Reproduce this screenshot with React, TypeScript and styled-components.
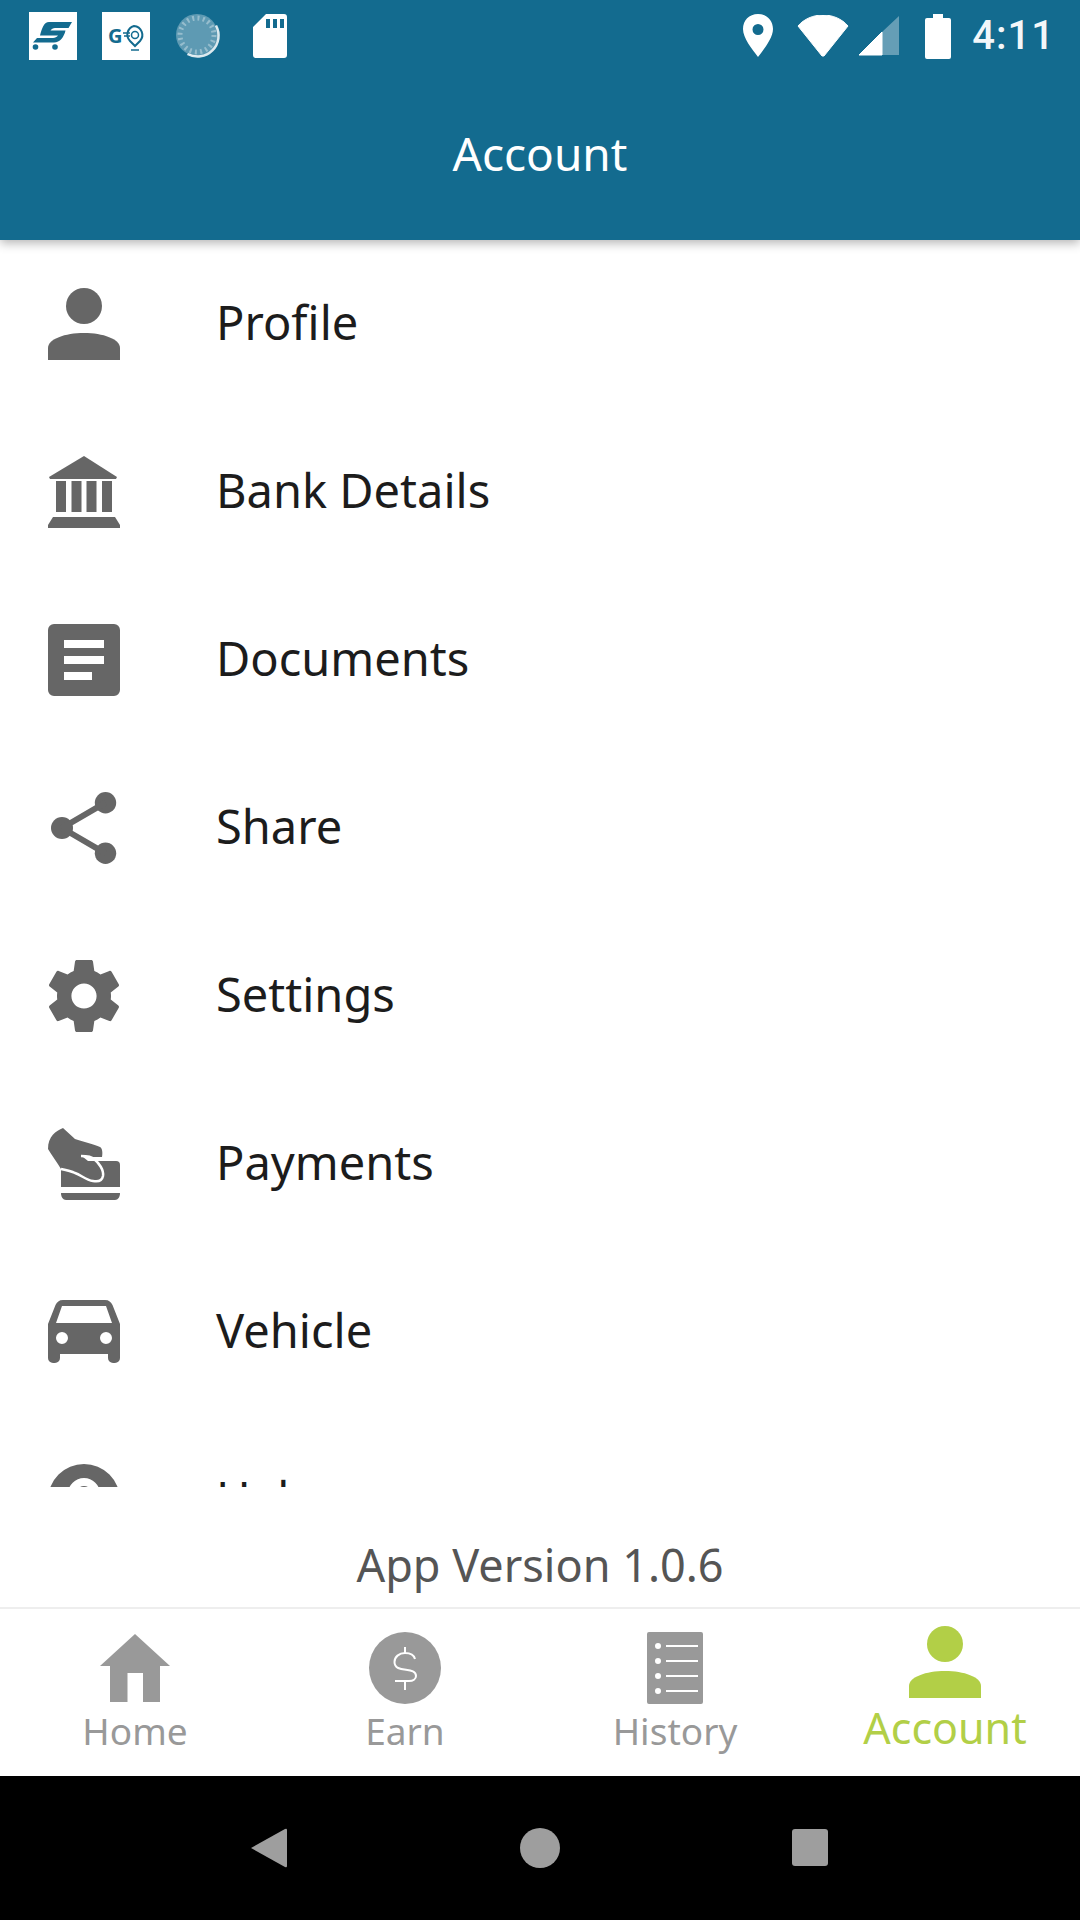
import React from "react";
import styled, { createGlobalStyle } from "styled-components";

const GlobalStyle = createGlobalStyle`
  html, body {
    margin: 0;
    padding: 0;
    background: #fff;
  }
  * {
    box-sizing: border-box;
  }
`;

const Screen = styled.div`
  display: flex;
  flex-direction: column;
  width: 1080px;
  height: 1920px;
  overflow: hidden;
  font-family: "Noto Sans", "Open Sans", sans-serif;
`;

const Header = styled.header`
  position: relative;
  z-index: 2;
  flex: 0 0 240px;
  background: #136b8f;
  box-shadow: 0 3px 10px rgba(0, 0, 0, 0.3);
  color: #fff;
`;

const StatusBar = styled.div`
  display: flex;
  align-items: center;
  justify-content: space-between;
  height: 72px;
  padding: 0 25px 0 29px;
`;

const StatusGroup = styled.div`
  display: flex;
  align-items: center;
`;

const Clock = styled.span`
  margin-left: 21px;
  font-family: Roboto, sans-serif;
  font-weight: 500;
  font-size: 40px;
  letter-spacing: 1px;
  line-height: 1;
  opacity: 0.95;
`;

const Title = styled.h1`
  margin: 0;
  padding-top: 49px;
  font-size: 46px;
  font-weight: 400;
  line-height: 64px;
  text-align: center;
`;

const List = styled.div`
  flex: 0 0 1247px;
  overflow: hidden;
`;

const Row = styled.div`
  display: flex;
  align-items: center;
  flex: none;
  height: 168px;
  padding-left: 48px;
`;

const RowIcon = styled.svg`
  flex: none;
  width: 72px;
  height: 72px;
  fill: #666;
`;

const RowLabel = styled.span`
  margin: 0 0 5px 96px;
  font-size: 47px;
  color: #1c1c1c;
`;

const Version = styled.div`
  display: flex;
  flex: 0 0 120px;
  align-items: center;
  justify-content: center;
  padding-top: 34px;
  font-size: 45px;
  color: #555;
`;

const TabBar = styled.nav`
  display: grid;
  flex: 0 0 169px;
  grid-template-columns: repeat(4, 1fr);
  border-top: 2px solid #eee;
`;

const Tab = styled.div<{ $active?: boolean }>`
  display: flex;
  flex-direction: column;
  align-items: center;
  padding-top: ${(p) => (p.$active ? "17px" : "23px")};
  color: ${(p) => (p.$active ? "#b2cf47" : "#999")};
  fill: ${(p) => (p.$active ? "#b2cf47" : "#999")};
`;

const TabIcon = styled.svg`
  width: 72px;
  height: 72px;
`;

const TabLabel = styled.span<{ $active?: boolean }>`
  font-size: ${(p) => (p.$active ? "43px" : "37px")};
  line-height: ${(p) => (p.$active ? "60px" : "54px")};
`;

const NavBar = styled.div`
  display: grid;
  flex: 0 0 144px;
  grid-template-columns: repeat(3, 40px);
  justify-content: center;
  align-items: center;
  column-gap: 231px;
  background: #000;
`;

const NavIcon = styled.svg`
  width: 40px;
  height: 40px;
  fill: #9e9e9e;
`;

const PersonPath = () => (
  <>
    <circle cx="36" cy="18" r="18" />
    <path d="M0 72V60C0 51 17 45 36 45s36 6 36 15v12z" />
  </>
);

const GEAR =
  "M19.43 12.98c.04-.32.07-.64.07-.98s-.03-.66-.07-.98l2.11-1.65c.19-.15.24-.42.12-.64l-2-3.46c-.12-.22-.39-.3-.61-.22l-2.49 1c-.52-.4-1.08-.73-1.69-.98l-.38-2.65C14.46 2.18 14.25 2 14 2h-4c-.25 0-.46.18-.49.42l-.38 2.65c-.61.25-1.17.59-1.69.98l-2.49-1c-.23-.09-.49 0-.61.22l-2 3.46c-.13.22-.07.49.12.64l2.11 1.65c-.04.32-.07.65-.07.98s.03.66.07.98l-2.11 1.65c-.19.15-.24.42-.12.64l2 3.46c.12.22.39.3.61.22l2.49-1c.52.4 1.08.73 1.69.98l.38 2.65c.03.24.24.42.49.42h4c.25 0 .46-.18.49-.42l.38-2.65c.61-.25 1.17-.59 1.69-.98l2.49 1c.23.09.49 0 .61-.22l2-3.46c.12-.22.07-.49-.12-.64l-2.11-1.65zM12 15.5c-1.93 0-3.5-1.57-3.5-3.5s1.57-3.5 3.5-3.5 3.5 1.57 3.5 3.5-1.57 3.5-3.5 3.5z";

const items: { label: string; icon: React.ReactNode }[] = [
  { label: "Profile", icon: <PersonPath /> },
  {
    label: "Bank Details",
    icon: (
      <>
        <path d="M36 0l33 21-1 2H2l-1-2z" />
        <path d="M8 25h10v31H8zM23.500 25h10v31h-10zM38.500 25h10v31h-10zM54 25h10v31H54z" />
        <path d="M5 61h62l5 8v3H0v-3z" />
      </>
    ),
  },
  {
    label: "Documents",
    icon: (
      <path
        fillRule="evenodd"
        d="M6 0h60a6 6 0 0 1 6 6v60a6 6 0 0 1-6 6H6a6 6 0 0 1-6-6V6a6 6 0 0 1 6-6zM16 16v8h40v-8zM16 32v8h40v-8zM16 48v8h28v-8z"
      />
    ),
  },
  {
    label: "Share",
    icon: (
      <>
        <circle cx="57.500" cy="10.700" r="10.700" />
        <circle cx="14" cy="36" r="11" />
        <circle cx="57.500" cy="61.300" r="10.700" />
        <path d="M14 36L57.500 10.700M14 36L57.500 61.300" stroke="#666" strokeWidth="6" />
      </>
    ),
  },
  {
    label: "Settings",
    icon: <path transform="translate(-7.200 -7.200) scale(3.600)" d={GEAR} />,
  },
  {
    label: "Payments",
    icon: (
      <>
        <path d="M13 33h55a4 4 0 0 1 4 4v22H13z" />
        <path d="M13 65h59c0 4-2 7-5 7H18c-3 0-5-3-5-7z" />
        <path d="M15 0C8 3 0 8 0 21c4 7 9 13 13 20l20 4 12-8-10-8h19c1-5 0-9-2-10-6-3-17-5-25-8z" />
        <path
          d="M33 28c5 0 10 0 13 3 5 4 10 11 9 17-1 5-5 6-10 5-7-1-12-6-18-8-4-2-9-3-14-4"
          fill="none"
          stroke="#fff"
          strokeWidth="2.500"
        />
      </>
    ),
  },
  {
    label: "Vehicle",
    icon: (
      <path
        fillRule="evenodd"
        d="M15 4h42c4 0 6 2 7.500 5L72 28v34a5 5 0 0 1-5 5h-2a5 5 0 0 1-5-5v-4H12v4a5 5 0 0 1-5 5H5a5 5 0 0 1-5-5V28L7.500 9C9 6 11 4 15 4zM14 10L8 27h56l-6-17zM14 36a6 6 0 1 0 0 12 6 6 0 0 0 0-12zM58 36a6 6 0 1 0 0 12 6 6 0 0 0 0-12z"
      />
    ),
  },
  {
    label: "Help",
    icon: (
      <path
        fillRule="evenodd"
        d="M36 0a36 36 0 1 1 0 72 36 36 0 0 1 0-72zM36 14a16 16 0 0 0-16 16h8a8 8 0 0 1 16 0c0 8-12 7-12 20h8c0-9 12-10 12-20a16 16 0 0 0-16-16z"
      />
    ),
  },
];

const App: React.FC = () => {
  return (
    <Screen>
      <GlobalStyle />
      <Header>
        <StatusBar>
          <StatusGroup>
            <svg width="48" height="48" viewBox="0 0 48 48">
              <rect width="48" height="48" fill="#fff" />
              <path
                d="M20 10H43L39.500 16H26C24 16 22.500 17 21.500 18.500H36.500C35 25 31 30.500 25 30.500H4L8 26H24C26 26 28 25 29 23.500H11C13 16 15 10 20 10z"
                fill="#136b8f"
              />
              <circle cx="6.500" cy="35" r="2.800" fill="#136b8f" />
              <circle cx="26" cy="35" r="2.800" fill="#136b8f" />
            </svg>
            <svg width="48" height="48" viewBox="0 0 48 48" style={{ marginLeft: 25 }}>
              <rect width="48" height="48" fill="#fff" />
              <text
                x="6"
                y="31"
                fontFamily="Noto Sans, sans-serif"
                fontWeight="700"
                fontSize="20"
                fill="#136b8f"
              >
                G
              </text>
              <path
                d="M32 14a9 9 0 0 1 6 15l-5 5-5-5a9 9 0 0 1 4-15z"
                fill="none"
                stroke="#136b8f"
                strokeWidth="2"
              />
              <circle cx="33" cy="23" r="3.500" fill="none" stroke="#136b8f" strokeWidth="1.500" />
              <path d="M21 21h7M22 24h6" stroke="#136b8f" strokeWidth="1.500" />
              <path d="M29 38h8" stroke="#136b8f" strokeWidth="1.500" />
            </svg>
            <svg width="48" height="48" viewBox="0 0 48 48" style={{ marginLeft: 24 }}>
              <circle cx="23" cy="23" r="21" fill="#fff" fillOpacity="0.32" />
              <circle
                cx="23"
                cy="23"
                r="17"
                fill="none"
                stroke="#fff"
                strokeOpacity="0.35"
                strokeWidth="5"
                strokeDasharray="2 3.340"
              />
              <path
                d="M42 13.500A21 21 0 0 1 13.500 42"
                fill="none"
                stroke="#fff"
                strokeOpacity="0.85"
                strokeWidth="2.500"
              />
            </svg>
            <svg width="36" height="46" viewBox="0 0 36 46" style={{ marginLeft: 30 }}>
              <path
                fillRule="evenodd"
                d="M14 1h18a3 3 0 0 1 3 3v38a3 3 0 0 1-3 3H4a3 3 0 0 1-3-3V14zM14 6v9h4V6zM21 6v9h4V6zM28 6v9h4V6z"
                fill="#fff"
              />
            </svg>
          </StatusGroup>
          <StatusGroup>
            <svg width="32" height="44" viewBox="0 0 32 44">
              <path
                fillRule="evenodd"
                d="M16 0C7 0 1 6.500 1 15c0 9 9 20 15 28 6-8 15-19 15-28C31 6.500 25 0 16 0zM16 10a5.500 5.500 0 1 1 0 11 5.500 5.500 0 0 1 0-11z"
                fill="#fff"
              />
            </svg>
            <svg width="52" height="42" viewBox="0 0 52 42" style={{ marginLeft: 23 }}>
              <path d="M1 11C7 4 16 0 26 0s19 4 25 11L27 41h-2z" fill="#fff" stroke="#fff" strokeLinejoin="round" />
            </svg>
            <svg width="42" height="42" viewBox="0 0 42 42" style={{ marginLeft: 9 }}>
              <path d="M24 17V40H1z" fill="#fff" stroke="#fff" strokeLinejoin="round" />
              <path d="M24 17L41 1v39H24z" fill="#fff" fillOpacity="0.35" />
            </svg>
            <svg width="26" height="45" viewBox="0 0 26 45" style={{ marginLeft: 25 }}>
              <path d="M8 0h10v4h6a2 2 0 0 1 2 2v37a2 2 0 0 1-2 2H2a2 2 0 0 1-2-2V6a2 2 0 0 1 2-2h6z" fill="#fff" />
            </svg>
            <Clock>4:11</Clock>
          </StatusGroup>
        </StatusBar>
        <Title>Account</Title>
      </Header>

      <List>
        {items.map((item) => (
          <Row key={item.label}>
            <RowIcon viewBox="0 0 72 72">{item.icon}</RowIcon>
            <RowLabel>{item.label}</RowLabel>
          </Row>
        ))}
      </List>

      <Version>App Version 1.0.6</Version>

      <TabBar>
        <Tab>
          <TabIcon viewBox="0 0 72 72">
            <path d="M36 2L71 34H61V70H44V41H28.500V70H11V34H1z" />
          </TabIcon>
          <TabLabel>Home</TabLabel>
        </Tab>
        <Tab>
          <TabIcon viewBox="0 0 72 72">
            <circle cx="36" cy="36" r="36" />
            <path
              d="M46 27c-1-4-5-6-10-6-6 0-10.500 4-10.500 9 0 12 21.500 4 21.500 14 0 3-3 5-7 5H26M36 15v6M36 49v9"
              fill="none"
              stroke="#fff"
              strokeWidth="2"
            />
          </TabIcon>
          <TabLabel>Earn</TabLabel>
        </Tab>
        <Tab>
          <TabIcon viewBox="0 0 72 72">
            <path
              fillRule="evenodd"
              d="M10 0h52a2 2 0 0 1 2 2v68a2 2 0 0 1-2 2H10a2 2 0 0 1-2-2V2a2 2 0 0 1 2-2zM19 11a3 3 0 1 0 0 6 3 3 0 0 0 0-6zM19 26a3 3 0 1 0 0 6 3 3 0 0 0 0-6zM19 41a3 3 0 1 0 0 6 3 3 0 0 0 0-6zM19 56a3 3 0 1 0 0 6 3 3 0 0 0 0-6zM27 13v2h32v-2zM27 28v2h32v-2zM27 43v2h32v-2zM27 58v2h32v-2z"
            />
          </TabIcon>
          <TabLabel>History</TabLabel>
        </Tab>
        <Tab $active>
          <TabIcon viewBox="0 0 72 72">
            <PersonPath />
          </TabIcon>
          <TabLabel $active>Account</TabLabel>
        </Tab>
      </TabBar>

      <NavBar>
        <NavIcon viewBox="0 0 40 40">
          <path d="M2 20L36 1Q38 0 38 2V38Q38 40 36 39z" />
        </NavIcon>
        <NavIcon viewBox="0 0 40 40">
          <circle cx="20" cy="20" r="20" />
        </NavIcon>
        <NavIcon viewBox="0 0 40 40">
          <rect x="1" y="1" width="36" height="37" rx="3" />
        </NavIcon>
      </NavBar>
    </Screen>
  );
};

export default App;
